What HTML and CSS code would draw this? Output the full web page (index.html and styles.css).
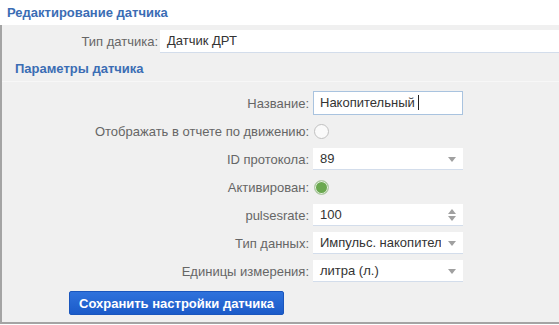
FILE: index.html
```html
<!DOCTYPE html>
<html lang="ru">
<head>
    <meta charset="UTF-8">
    <title>Редактирование датчика</title>
    <link rel="stylesheet" href="styles.css">
</head>
<body>
    <div class="panel">
        <div class="panel-title">Редактирование датчика</div>
        <div class="panel-body">
            <div class="type-row">
                <span class="label">Тип датчика:</span>
                <div class="type-value">Датчик ДРТ</div>
            </div>
            <div class="section">
                <div class="section-title">Параметры датчика</div>
                <div class="form-grid">
                    <span class="label">Название:</span>
                    <div class="field field-focus">Накопительный <span class="caret"></span></div>

                    <span class="label">Отображать в отчете по движению:</span>
                    <div><span class="radio"></span></div>

                    <span class="label">ID протокола:</span>
                    <div class="field field-select">89 <span class="arrow"></span></div>

                    <span class="label">Активирован:</span>
                    <div><span class="radio radio-on"></span></div>

                    <span class="label">pulsesrate:</span>
                    <div class="field field-select">100 <span class="spin"><span class="up"></span><span class="down"></span></span></div>

                    <span class="label">Тип данных:</span>
                    <div class="field field-select"><span class="clip">Импульс. накопительный</span> <span class="arrow"></span></div>

                    <span class="label">Единицы измерения:</span>
                    <div class="field field-select">литра (л.) <span class="arrow"></span></div>
                </div>
                <div class="actions">
                    <button class="btn-save">Сохранить настройки датчика</button>
                </div>
            </div>
        </div>
    </div>
</body>
</html>
```

FILE: styles.css
```css
body {
    margin: 0;
    font-family: "Liberation Sans", Arial, sans-serif;
    font-size: 13px;
    background-color: #ffffff;
}

.panel {
    width: 100%;
}

.panel-title {
    height: 25px;
    line-height: 25px;
    padding-left: 7px;
    font-weight: bold;
    color: #3b6db4;
    background-color: #ffffff;
}

.panel-body {
    background-color: #f0f0f0;
    border-left: 2px solid #a4a4a4;
    border-bottom: 2px solid #a4a4a4;
    padding-top: 5px;
    box-sizing: border-box;
    height: 299px;
}

.label {
    color: #666666;
    text-align: right;
    white-space: nowrap;
}

.type-row {
    display: grid;
    grid-template-columns: 156px 1fr;
    column-gap: 2px;
    align-items: center;
    height: 23px;
}

.type-value {
    height: 22px;
    line-height: 22px;
    padding-left: 7px;
    background-color: #ffffff;
    border-bottom: 1px solid #d3ddeb;
    color: #333333;
}

.section-title {
    height: 28px;
    line-height: 32px;
    padding-left: 13px;
    font-weight: bold;
    color: #3b6db4;
    border-bottom: 1px solid #f7f7f7;
}

.form-grid {
    display: grid;
    grid-template-columns: 307px 150px;
    grid-auto-rows: 28px;
    column-gap: 4px;
    align-items: center;
    padding-top: 7px;
}

.field {
    position: relative;
    height: 22px;
    line-height: 22px;
    padding-left: 7px;
    box-sizing: border-box;
    background-color: #ffffff;
    color: #333333;
    white-space: nowrap;
    overflow: hidden;
}

.field-select {
    border-bottom: 1px solid #d3ddeb;
}

.field-focus {
    height: 24px;
    line-height: 22px;
    border: 1px solid #a9c3df;
    padding-left: 6px;
}

.caret {
    display: inline-block;
    width: 1px;
    height: 15px;
    background-color: #222222;
    vertical-align: -3px;
}

.clip {
    display: inline-block;
    width: 121px;
    overflow: hidden;
    vertical-align: top;
}

.arrow {
    position: absolute;
    right: 7px;
    top: 9px;
    border-left: 4px solid transparent;
    border-right: 4px solid transparent;
    border-top: 5px solid #a0a0a0;
}

.spin .up, .spin .down {
    position: absolute;
    right: 7px;
    border-left: 4px solid transparent;
    border-right: 4px solid transparent;
}

.spin .up {
    top: 5px;
    border-bottom: 5px solid #a0a0a0;
}

.spin .down {
    top: 12px;
    border-top: 5px solid #a0a0a0;
}

.radio {
    display: block;
    width: 13px;
    height: 13px;
    margin-left: 1px;
    border: 1px solid #c0c0c0;
    border-radius: 50%;
    background-color: #fafafa;
}

.radio-on {
    background-color: #6aa84f;
    border-color: #b9cdb0;
    box-shadow: inset 0 0 0 1px #eaf2e6;
}

.actions {
    padding: 6px 0 0 67px;
}

.btn-save {
    height: 24px;
    padding: 0 9px;
    font-family: "Liberation Sans", Arial, sans-serif;
    font-size: 13px;
    font-weight: bold;
    color: #ffffff;
    background: linear-gradient(#2f72dc, #1b5bc9);
    border: 1px solid #1a56bd;
    border-radius: 2px;
    cursor: pointer;
}
```
